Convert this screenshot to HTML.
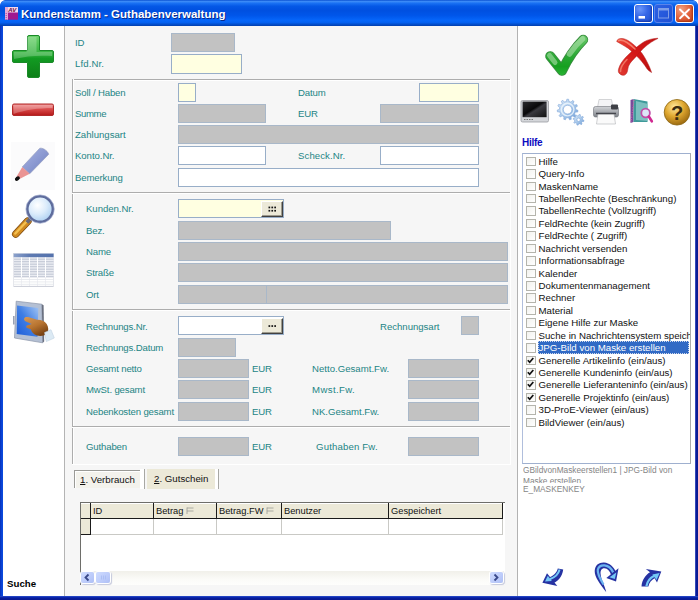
<!DOCTYPE html>
<html lang="de">
<head>
<meta charset="utf-8">
<title>Kundenstamm - Guthabenverwaltung</title>
<style>
html,body{margin:0;padding:0;}
body{width:698px;height:600px;overflow:hidden;background:#fff;font-family:"Liberation Sans",sans-serif;font-size:11px;position:relative;}
#win{position:absolute;left:0;top:0;width:698px;height:600px;overflow:hidden;background:#0b4bd8;border-radius:6px 6px 0 0;}
#tbar{position:absolute;left:0;top:0;width:698px;height:26px;border-radius:6px 6px 0 0;
background:linear-gradient(to bottom,#0a52d2 0%,#3c8cf8 6%,#1a72f4 12%,#0458e6 24%,#0050e0 40%,#0056ea 60%,#0666fa 78%,#0562f2 86%,#0450cf 93%,#033fae 100%);}
#tbar .ttl{position:absolute;left:21px;top:5px;color:#fff;font-weight:bold;font-size:11.5px;line-height:18px;white-space:nowrap;text-shadow:1px 1px 0 #0a2a8a;letter-spacing:0;}
#lb{position:absolute;left:0;top:26px;width:3px;height:574px;background:linear-gradient(to right,#0830b8,#0a44d6 55%,#0b4ce0);}
#rb{position:absolute;left:695px;top:26px;width:3px;height:574px;background:linear-gradient(to right,#5a70d0 0%,#0a1c9a 35%,#081890 100%);}
#bb{position:absolute;left:0;top:596px;width:698px;height:4px;background:linear-gradient(to bottom,#3a58d0 0%,#0a2cb4 25%,#081c9a 60%,#08188e 100%);}
#left{position:absolute;left:3px;top:26px;width:61px;height:570px;background:#fff;}
#ldiv{position:absolute;left:64px;top:26px;width:1px;height:570px;background:#b4b4b4;}
#main{position:absolute;left:65px;top:26px;width:452px;height:570px;background:#f6f6f6;}
#rdiv{position:absolute;left:517px;top:26px;width:1px;height:570px;background:#b2b2b2;}
#right{position:absolute;left:518px;top:26px;width:177px;height:570px;background:#fff;}
.l{position:absolute;color:#1c8585;font-size:9.6px;letter-spacing:-0.15px;line-height:11px;white-space:nowrap;}
.f{position:absolute;box-sizing:border-box;border:1px solid #8fa9c4;}
.g{background:#c2c2c2;border-color:#a9b8c9;}
.y{background:#ffffe1;border-color:#98aec8;}
.w{background:#fff;border-color:#98aec8;}
.hl{position:absolute;height:1px;background:#adadad;box-shadow:0 1px 0 #fff;}
.vl{position:absolute;width:1px;background:#adadad;box-shadow:1px 0 0 #fff;}
.abs{position:absolute;}
.wb{position:absolute;top:4px;width:19px;height:19px;box-sizing:border-box;border:1px solid #fff;border-radius:3px;background:radial-gradient(circle at 30% 25%,#6a96fa 0%,#3466e6 45%,#2050cc 100%);box-shadow:inset -1px -1px 2px #1838a8;}
.wb svg{position:absolute;left:-1px;top:-1px}
.wb.dis{border-color:#5a84ea;background:linear-gradient(135deg,#2d62e4,#1f50d4);box-shadow:none;}
.wb.cl{background:radial-gradient(circle at 30% 25%,#f2a080 0%,#e2633c 50%,#c4421e 100%);box-shadow:inset -1px -1px 2px #a83410;}
.eb{position:absolute;width:22px;height:16px;box-sizing:border-box;background:#ece9d8;border-top:1px solid #fff;border-left:1px solid #fff;border-right:1px solid #404040;border-bottom:1px solid #404040;box-shadow:inset -1px -1px 0 #9d9a8c;}
.eb svg{position:absolute;left:0;top:0}
.li{position:absolute;left:15px;height:12.400px;font-size:9.700px;line-height:14.400px;color:#111;white-space:nowrap;padding:0 1px;}
.li.sel{background:#316ac5;color:#fff;right:3px;outline:1px dotted #cfd8ea;outline-offset:-1px;}
.cb{position:absolute;left:3.5px;width:9.5px;height:9.5px;box-sizing:border-box;border:1px solid #b4b4ac;background:linear-gradient(135deg,#f2f2ee,#fff);}
.cb svg{position:absolute;left:-1px;top:-1px;}
.tb{font-size:9.7px;line-height:12px;color:#111;white-space:nowrap;}
.gh{top:503px;height:16px;box-sizing:border-box;border-left:1px solid #1a1a1a;font-size:9.3px;line-height:16px;padding-left:2px;color:#111;white-space:nowrap;}
.gh svg.fl{margin-left:3px;vertical-align:0px;}
.gv{top:519px;width:1px;height:15px;background:#c9c9c5;}
.sbb{width:13px;height:11px;border-radius:2px;background:linear-gradient(135deg,#cfdcff,#bccbfa 60%,#aebff5);box-shadow:0 0 0 1px #fff, 1px 1px 1px 1px #c5c9dc;}
.sbb svg{display:block}
</style>
</head>
<body>
<div id="win">
<div id="tbar"><div class="ttl">Kundenstamm - Guthabenverwaltung</div>
<svg class="abs" style="left:4px;top:6px" width="16" height="15" viewBox="4 6 16 15">
<rect x="5" y="7" width="13" height="12.700" fill="#a01890"/>
<rect x="5" y="7" width="13" height="5.500" fill="#f2d8ec"/>
<rect x="5" y="7" width="3" height="12.700" fill="#e4a8d6"/>
<path d="M6.200 13v6.500" stroke="#a01890" stroke-width="0.800" stroke-dasharray="1 1"/>
<text x="12.300" y="11.800" text-anchor="middle" font-family="Liberation Sans, sans-serif" font-weight="bold" font-style="italic" font-size="6" fill="#6a0a40">AV</text>
</svg>
<div class="wb" style="left:634px"><svg width="19" height="19" viewBox="0 0 19 19"><rect x="4.500" y="12" width="6.500" height="2.600" fill="#fff"/></svg></div>
<div class="wb dis" style="left:654px"><svg width="19" height="19" viewBox="0 0 19 19"><rect x="4.500" y="4.500" width="10" height="9.500" fill="none" stroke="#7f9ee8" stroke-width="1"/><rect x="4.500" y="4.500" width="10" height="2" fill="#7f9ee8"/></svg></div>
<div class="wb cl" style="left:675px"><svg width="19" height="19" viewBox="0 0 19 19"><path d="M5 5.500L14 14.200M14 5.500L5 14.200" stroke="#fff" stroke-width="1.900" stroke-linecap="round"/></svg></div>
</div>
<div id="lb"></div><div id="rb"></div>
<div id="left"></div><div id="ldiv"></div>
<div id="main"></div><div id="rdiv"></div>
<div id="right"></div>
<div id="bb"></div>
<!-- FORM -->
<div id="form">
<div class="l" style="left:75px;top:37px">ID</div>
<div class="f g" style="left:171px;top:33px;width:64px;height:19px"></div>
<div class="l" style="left:75px;top:58px;letter-spacing:0.12px">Lfd.Nr.</div>
<div class="f y" style="left:171px;top:54px;width:71px;height:20px"></div>

<div class="hl" style="left:72px;top:79px;width:438px"></div>
<div class="vl" style="left:72px;top:79px;height:385px"></div>
<div class="abs" style="left:510px;top:79px;height:386px;width:1px;background:#fff"></div>
<div class="hl" style="left:72px;top:192px;width:438px"></div>
<div class="hl" style="left:72px;top:309px;width:438px"></div>
<div class="hl" style="left:72px;top:426px;width:438px"></div>
<div class="abs" style="left:72px;top:464px;width:439px;height:1px;background:#fff"></div>

<div class="l" style="left:75px;top:87px">Soll / Haben</div>
<div class="f y" style="left:178px;top:83px;width:18px;height:19px"></div>
<div class="l" style="left:298px;top:87px">Datum</div>
<div class="f y" style="left:419px;top:83px;width:60px;height:19px"></div>
<div class="l" style="left:75px;top:108px;letter-spacing:-0.37px">Summe</div>
<div class="f g" style="left:178px;top:104px;width:88px;height:19px"></div>
<div class="l" style="left:298px;top:108px">EUR</div>
<div class="f g" style="left:380px;top:104px;width:99px;height:19px"></div>
<div class="l" style="left:75px;top:129px;letter-spacing:0.00px">Zahlungsart</div>
<div class="f g" style="left:178px;top:125px;width:301px;height:19px"></div>
<div class="l" style="left:75px;top:150px;letter-spacing:-0.06px">Konto.Nr.</div>
<div class="f w" style="left:178px;top:146px;width:88px;height:19px"></div>
<div class="l" style="left:298px;top:150px;letter-spacing:0.09px">Scheck.Nr.</div>
<div class="f w" style="left:380px;top:146px;width:99px;height:19px"></div>
<div class="l" style="left:75px;top:172px">Bemerkung</div>
<div class="f w" style="left:178px;top:168px;width:301px;height:19px"></div>

<div class="l" style="left:86px;top:203px;letter-spacing:-0.05px">Kunden.Nr.</div>
<div class="f y" style="left:178px;top:199px;width:106px;height:19px"></div>
<div class="eb" style="left:261px;top:201px"><svg width="20" height="14" viewBox="0 0 20 14"><g fill="#111"><rect x="6.500" y="4.600" width="1.700" height="1.700"/><rect x="9.400" y="4.600" width="1.700" height="1.700"/><rect x="12.300" y="4.600" width="1.700" height="1.700"/><rect x="6.500" y="7.900" width="1.700" height="1.700"/><rect x="9.400" y="7.900" width="1.700" height="1.700"/><rect x="12.300" y="7.900" width="1.700" height="1.700"/></g></svg></div>
<div class="l" style="left:86px;top:225px">Bez.</div>
<div class="f g" style="left:178px;top:221px;width:213px;height:19px"></div>
<div class="l" style="left:86px;top:246px">Name</div>
<div class="f g" style="left:178px;top:242px;width:330px;height:19px"></div>
<div class="l" style="left:86px;top:267px">Straße</div>
<div class="f g" style="left:178px;top:263px;width:330px;height:19px"></div>
<div class="l" style="left:86px;top:289px">Ort</div>
<div class="f g" style="left:178px;top:285px;width:89px;height:19px"></div>
<div class="f g" style="left:266px;top:285px;width:242px;height:19px"></div>

<div class="l" style="left:86px;top:321px">Rechnungs.Nr.</div>
<div class="f w" style="left:178px;top:316px;width:106px;height:19px"></div>
<div class="eb" style="left:261px;top:318px"><svg width="20" height="14" viewBox="0 0 20 14"><g fill="#111"><rect x="6.500" y="6.200" width="1.700" height="1.700"/><rect x="9.400" y="6.200" width="1.700" height="1.700"/><rect x="12.300" y="6.200" width="1.700" height="1.700"/></g></svg></div>
<div class="l" style="left:380px;top:321px;letter-spacing:-0.02px">Rechnungsart</div>
<div class="f g" style="left:461px;top:316px;width:18px;height:19px"></div>
<div class="l" style="left:86px;top:342px">Rechnungs.Datum</div>
<div class="f g" style="left:178px;top:338px;width:58px;height:19px"></div>
<div class="l" style="left:86px;top:363px">Gesamt netto</div>
<div class="f g" style="left:178px;top:359px;width:71px;height:19px"></div>
<div class="l" style="left:252px;top:363px">EUR</div>
<div class="l" style="left:312px;top:363px;letter-spacing:0.02px">Netto.Gesamt.Fw.</div>
<div class="f g" style="left:408px;top:359px;width:71px;height:19px"></div>
<div class="l" style="left:86px;top:384px">MwSt. gesamt</div>
<div class="f g" style="left:178px;top:380px;width:71px;height:19px"></div>
<div class="l" style="left:252px;top:384px">EUR</div>
<div class="l" style="left:312px;top:384px;letter-spacing:0.39px">Mwst.Fw.</div>
<div class="f g" style="left:408px;top:380px;width:71px;height:19px"></div>
<div class="l" style="left:86px;top:406px">Nebenkosten gesamt</div>
<div class="f g" style="left:178px;top:402px;width:71px;height:19px"></div>
<div class="l" style="left:252px;top:406px">EUR</div>
<div class="l" style="left:312px;top:406px;letter-spacing:0.01px">NK.Gesamt.Fw.</div>
<div class="f g" style="left:408px;top:402px;width:71px;height:19px"></div>

<div class="l" style="left:86px;top:441px">Guthaben</div>
<div class="f g" style="left:178px;top:437px;width:71px;height:19px"></div>
<div class="l" style="left:252px;top:441px">EUR</div>
<div class="l" style="left:316px;top:441px;letter-spacing:0.17px">Guthaben Fw.</div>
<div class="f g" style="left:408px;top:437px;width:71px;height:19px"></div>
</div>
<!-- /FORM -->
<!-- TABS -->
<div id="tabs">
<div class="abs" style="left:74px;top:470px;width:66px;height:18px;background:#f3f2ec;border-left:1px solid #9a9a96;border-top:1px solid #9a9a96;box-sizing:border-box;box-shadow:inset 1px 1px 0 #fff;"></div>
<div class="abs" style="left:140px;top:469px;width:4px;height:20px;background:#fff"></div>
<div class="abs" style="left:144px;top:469px;width:1px;height:20px;background:#a8a8a4"></div>
<div class="abs tb" style="left:80px;top:474px"><u>1</u>. Verbrauch</div>
<div class="abs" style="left:147px;top:469px;width:68px;height:20px;background:#ece9d8"></div>
<div class="abs" style="left:215px;top:469px;width:3px;height:20px;background:#fff"></div>
<div class="abs" style="left:218px;top:469px;width:1px;height:20px;background:#a8a8a4"></div>
<div class="abs tb" style="left:154px;top:473px"><u>2</u>. Gutschein</div>
</div>
<!-- GRID -->
<div id="grid">
<div class="abs" style="left:80px;top:502px;width:425px;height:83px;background:#fff;border-left:1px solid #6e6e6a;border-top:1px solid #6e6e6a;box-sizing:border-box;"></div>
<div class="abs" style="left:81px;top:503px;width:422px;height:16px;background:#ece9d8;border-bottom:1px solid #1a1a1a;box-sizing:border-box;box-shadow:inset 0 1px 0 #fff"></div>
<div class="abs gh" style="left:90px;width:63px">ID</div>
<div class="abs gh" style="left:153px;width:63px">Betrag<svg class="fl" width="8" height="7" viewBox="0 0 8 7"><path d="M1 0.5V7M1 1H7.5M1 4H7.5" stroke="#9a9a95" stroke-width="0.8" fill="none"/></svg></div>
<div class="abs gh" style="left:216px;width:65px">Betrag.FW<svg class="fl" width="8" height="7" viewBox="0 0 8 7"><path d="M1 0.5V7M1 1H7.5M1 4H7.5" stroke="#9a9a95" stroke-width="0.8" fill="none"/></svg></div>
<div class="abs gh" style="left:281px;width:107px">Benutzer</div>
<div class="abs gh" style="left:388px;width:115px;border-right:1px solid #1a1a1a">Gespeichert</div>
<div class="abs" style="left:81px;top:519px;width:10px;height:16px;background:#ece9d8;border-right:1px solid #1a1a1a;border-bottom:1px solid #1a1a1a;box-sizing:border-box"></div>
<div class="abs" style="left:91px;top:534px;width:412px;height:1px;background:#c9c9c5"></div>
<div class="abs gv" style="left:153px"></div><div class="abs gv" style="left:216px"></div><div class="abs gv" style="left:281px"></div><div class="abs gv" style="left:388px"></div><div class="abs gv" style="left:502px"></div>
<div class="abs" style="left:81px;top:571px;width:423px;height:14px;background:linear-gradient(to bottom,#f1f0ea,#fbfbf8 60%,#fefefc)"></div>
<div class="abs sbb" style="left:81px;top:572px"><svg width="12" height="11" viewBox="0 0 12 11"><path d="M7.5 2.5L4.5 5.5L7.5 8.5" stroke="#3a4a8a" stroke-width="1.8" fill="none"/></svg></div>
<div class="abs sbb" style="left:96px;top:572px;width:14px"><svg width="12" height="11" viewBox="0 0 12 11"><path d="M5.500 3.500V7.500M7.500 3.500V7.500M9.500 3.500V7.500" stroke="#a9bdf3" stroke-width="0.9" fill="none"/></svg></div>
<div class="abs sbb" style="left:490px;top:572px"><svg width="12" height="11" viewBox="0 0 12 11"><path d="M4.5 2.5L7.5 5.5L4.5 8.5" stroke="#3a4a8a" stroke-width="1.8" fill="none"/></svg></div>
</div>
<!-- LEFTICONS -->
<div id="lefticons">
<svg class="abs" style="left:3px;top:28px" width="61" height="100" viewBox="3 28 61 100">
<defs>
<linearGradient id="gp" x1="0" y1="0" x2="0" y2="1"><stop offset="0" stop-color="#6fd46f"/><stop offset="0.45" stop-color="#2fae3a"/><stop offset="0.55" stop-color="#129a22"/><stop offset="1" stop-color="#0d7f18"/></linearGradient>
<linearGradient id="gm" x1="0" y1="0" x2="0" y2="1"><stop offset="0" stop-color="#f08a8a"/><stop offset="0.5" stop-color="#d64545"/><stop offset="1" stop-color="#b41818"/></linearGradient>
</defs>
<path d="M29 35.5h9a1.5 1.5 0 0 1 1.500 1.500v13.500h12.500a1.500 1.500 0 0 1 1.500 1.500v9a1.500 1.500 0 0 1 -1.500 1.500h-12.500v13.500a1.500 1.500 0 0 1 -1.500 1.500h-9a1.500 1.500 0 0 1 -1.500 -1.500v-13.500h-13.500a1.500 1.500 0 0 1 -1.500 -1.500v-9a1.500 1.500 0 0 1 1.500 -1.500h13.500v-13.500a1.500 1.500 0 0 1 1.500 -1.500z" fill="url(#gp)" stroke="#1a8a28" stroke-width="1"/>
<path d="M14 52h12.500v-15h10v15h15.500v4c-12 -1 -26 0 -38 3z" fill="#fff" opacity="0.22"/>
<rect x="12.500" y="104" width="41" height="11.500" rx="1.500" fill="url(#gm)" stroke="#b02a2a" stroke-width="1"/>
<path d="M13.500 105h39v3c-14 0 -28 2 -39 6z" fill="#fff" opacity="0.25"/>
</svg>
<svg class="abs" style="left:3px;top:135px" width="61" height="110" viewBox="3 135 61 110">
<defs>
<linearGradient id="pb" x1="0" y1="0" x2="1" y2="1"><stop offset="0" stop-color="#a8b4e2"/><stop offset="0.5" stop-color="#8c9ad2"/><stop offset="1" stop-color="#6f7fbe"/></linearGradient>
<radialGradient id="lens" cx="0.4" cy="0.35" r="0.7"><stop offset="0" stop-color="#ffffff"/><stop offset="0.5" stop-color="#dcecfb"/><stop offset="1" stop-color="#a9cdf0"/></radialGradient>
<linearGradient id="hd" x1="0" y1="0" x2="1" y2="1"><stop offset="0" stop-color="#f2b04a"/><stop offset="0.5" stop-color="#d98c1c"/><stop offset="1" stop-color="#a86410"/></linearGradient>
</defs>
<rect x="11" y="142" width="44" height="48" fill="#fbfbfc"/>
<path d="M39.600 148.400c2.500 -1.200 8.200 2.200 9.100 5.900L29.700 173.800L22.300 166.900Z" fill="url(#pb)" stroke="#8a94b8" stroke-width="0.600"/>
<path d="M22.300 166.900L29.700 173.800L19.500 179L16.600 176.400Z" fill="#ea9494"/>
<ellipse cx="17.400" cy="178.600" rx="2.800" ry="1.900" transform="rotate(-38 17.400 178.600)" fill="#111"/>
<path d="M27.800 221.200L15.800 234" stroke="#7a4a14" stroke-width="7.600" stroke-linecap="round"/>
<path d="M27.800 221.200L15.800 234" stroke="#d08a20" stroke-width="6.200" stroke-linecap="round"/>
<path d="M27.300 220.700L15.300 233.500" stroke="#f4c050" stroke-width="2.400" stroke-linecap="round"/>
<path d="M31.500 217.500L27 222.500" stroke="#6a6a78" stroke-width="4"/>
<circle cx="40.100" cy="209.100" r="12.800" fill="url(#lens)" stroke="#5e6c9c" stroke-width="2.600"/>
<circle cx="40.100" cy="209.100" r="14.200" fill="none" stroke="#a4aed0" stroke-width="0.700"/>
</svg>
<svg class="abs" style="left:3px;top:245px" width="61" height="105" viewBox="3 245 61 105">
<defs>
<linearGradient id="tfade" x1="0" y1="0" x2="0" y2="1"><stop offset="0" stop-color="#fff" stop-opacity="0"/><stop offset="0.55" stop-color="#fff" stop-opacity="0"/><stop offset="1" stop-color="#fff" stop-opacity="0.850"/></linearGradient>
<linearGradient id="thd" x1="0" y1="0" x2="1" y2="0"><stop offset="0" stop-color="#8ca2cc"/><stop offset="0.4" stop-color="#5e7ab2"/><stop offset="1" stop-color="#5472ac"/></linearGradient><linearGradient id="scr" x1="0" y1="1" x2="1" y2="0"><stop offset="0" stop-color="#1c5cd8"/><stop offset="0.5" stop-color="#3f7ee4"/><stop offset="1" stop-color="#a4c6f4"/></linearGradient>
<linearGradient id="hand" x1="0" y1="0" x2="0.600" y2="1"><stop offset="0" stop-color="#d89a58"/><stop offset="0.55" stop-color="#b87430"/><stop offset="1" stop-color="#7a4414"/></linearGradient>
</defs>
<rect x="13.600" y="253.400" width="40" height="33" fill="#fff" stroke="#d4d8e0" stroke-width="0.600"/>
<rect x="13.600" y="257" width="40" height="20.500" fill="#eaecf2"/>
<rect x="13.600" y="253.600" width="40" height="3.600" fill="url(#thd)"/>
<path d="M14 259.2h39.500" stroke="#bcc2d0" stroke-width="0.900"/><path d="M14 261.7h39.500" stroke="#bcc2d0" stroke-width="0.900"/><path d="M14 264.2h39.500" stroke="#bcc2d0" stroke-width="0.900"/><path d="M14 266.7h39.500" stroke="#bcc2d0" stroke-width="0.900"/><path d="M14 269.2h39.500" stroke="#bcc2d0" stroke-width="0.900"/><path d="M14 271.7h39.500" stroke="#bcc2d0" stroke-width="0.900"/><path d="M14 274.2h39.500" stroke="#bcc2d0" stroke-width="0.900"/><path d="M14 276.7h39.500" stroke="#bcc2d0" stroke-width="0.900"/><path d="M14 279.5h39.500" stroke="#dfe2e8" stroke-width="0.700"/><path d="M14 281.9h39.500" stroke="#dfe2e8" stroke-width="0.700"/><path d="M14 284.3h39.500" stroke="#dfe2e8" stroke-width="0.700"/>
<g stroke="#fff" stroke-width="1"><path d="M21.500 257.500v20M29.500 257.500v20M37.500 257.500v20M45.500 257.500v20"/></g>
<g stroke="#e4e6ec" stroke-width="0.600"><path d="M21.500 277.500v9M29.500 277.500v9M37.500 277.500v9M45.500 277.500v9"/></g>
<path d="M14 286.400h39.500" stroke="#c4c8d2" stroke-width="0.800"/>
<path d="M16.200 301.200L41.800 304.200L42.700 342.800L14.500 338Z" fill="#b4c0d4" stroke="#8a94a8" stroke-width="0.700"/>
<path d="M41.800 304.200L43.600 305.200L44.200 341.500L42.700 342.800Z" fill="#6a7080"/>
<path d="M17.100 305.500L38.300 308.100L37.500 336.700L16.700 334.100Z" fill="url(#scr)"/>
<path d="M13 316h1.600v8.500h-1.600z" fill="#9aa2b4"/>
<path d="M24.300 318.300c0.500 -1.300 2 -1.600 3.800 -1.200l9 2.600c3.500 -0.200 7.500 1.200 9.600 4.200c1.800 2.800 2 6.500 0.800 9.300c-2.500 2.600 -7 3.300 -10.500 2.200c-3.200 -1 -5.600 -3.500 -6.200 -6.200l-3.600 -1.200c-1.200 -0.600 -1.300 -1.800 -0.300 -2.500l4.800 -1.600l-6.300 -2.700c-1.200 -0.600 -1.600 -1.800 -1.100 -2.900z" fill="url(#hand)"/>
<path d="M44.500 332.500l6.500 -2.800l3.300 8.300l-8 3.600z" fill="#dceaf4" stroke="#b8cadc" stroke-width="0.500"/>
</svg>
<div class="abs" style="left:7px;top:578px;font-weight:bold;font-size:9.700px;line-height:12px;color:#000">Suche</div>
</div>
<!-- RIGHT -->
<div id="rightp">
<svg class="abs" style="left:530px;top:28px" width="150" height="60" viewBox="530 28 150 60">
<defs>
<linearGradient id="ck" gradientUnits="userSpaceOnUse" x1="0" y1="35" x2="0" y2="77"><stop offset="0" stop-color="#6ccc6c"/><stop offset="0.5" stop-color="#2aa834"/><stop offset="0.75" stop-color="#16a020"/><stop offset="1" stop-color="#2cb838"/></linearGradient>
<linearGradient id="rx" x1="0" y1="0" x2="1" y2="1"><stop offset="0" stop-color="#ee4a3a"/><stop offset="0.5" stop-color="#d81818"/><stop offset="1" stop-color="#b40e0e"/></linearGradient><linearGradient id="rx2" x1="1" y1="0" x2="0" y2="1"><stop offset="0" stop-color="#c01414"/><stop offset="0.5" stop-color="#d41818"/><stop offset="1" stop-color="#e03a30"/></linearGradient>
</defs>
<path d="M550.200 56.200L562 70.800Q571 52 583.200 39.800" stroke="#3a8c40" stroke-width="10" stroke-linecap="round" stroke-linejoin="round" fill="none"/>
<path d="M550.200 56.200L562 70.800Q571 52 583.200 39.800" stroke="url(#ck)" stroke-width="8.200" stroke-linecap="round" stroke-linejoin="round" fill="none"/>
<path d="M549.500 55.500L555 62.500" stroke="#b8e4b4" stroke-width="5" stroke-linecap="round" fill="none" opacity="0.550"/>
<path d="M569.500 54Q575.500 45 582.500 39" stroke="#b8e4b4" stroke-width="5.500" stroke-linecap="round" fill="none" opacity="0.550"/>
<path d="M616.700 41.500C617 39.500 619 38.300 622 38.500C627 38.800 632 43 636.600 47.300C641 51.500 644 56 645.800 59.500C648.500 64.500 650.500 69 651.600 72.500C649.500 71.500 648 70 647 68.800C644 64 640.500 59.500 636.600 56C633.500 53 631 50.500 628 48.200C624 45.500 620 43.500 616.700 41.500Z" fill="url(#rx)" stroke="#b01a1a" stroke-width="0.500"/>
<path d="M657.900 38.200C654 38.500 650 39.200 647 40.400C643 42 640 44.500 636.600 47.300C632 51 628.500 54.500 625.300 57.800C622 61.500 620 64.500 618.800 68.200C618 70.500 618.200 72.300 619.300 73.400C620.800 75 623 75.600 624.500 75.100C626.300 74.300 627.200 72.500 627.500 70.800C627.700 69.300 628 67.800 628.400 66.400C630 62.500 632.800 59.800 635.800 56.900C638 54.500 640.200 51.500 642.700 49.100C645.500 46.300 648.500 44 651.400 42.100C653.800 40.600 656 39.300 657.900 38.500Z" fill="url(#rx2)" stroke="#b01a1a" stroke-width="0.500"/>
<path d="M618.500 40.500C621 39.500 624 40.500 627 42.500C630 44.500 633 47 635 49" stroke="#f8907a" stroke-width="1.600" fill="none" opacity="0.800" stroke-linecap="round"/>
<path d="M620.500 71.500C620.500 68 623 63.500 627 59.500" stroke="#f8907a" stroke-width="1.600" fill="none" opacity="0.700" stroke-linecap="round"/>
</svg>
<svg class="abs" style="left:518px;top:94px" width="176" height="36" viewBox="518 94 176 36">
<defs>
<linearGradient id="mon" x1="0" y1="0" x2="1" y2="1"><stop offset="0" stop-color="#2a2a2e"/><stop offset="0.45" stop-color="#08080a"/><stop offset="0.55" stop-color="#3a3a40"/><stop offset="1" stop-color="#111"/></linearGradient>
<radialGradient id="hq" cx="0.4" cy="0.3" r="0.8"><stop offset="0" stop-color="#ffe9a0"/><stop offset="0.45" stop-color="#e0a830"/><stop offset="1" stop-color="#8a5a08"/></radialGradient>
<linearGradient id="gear" x1="0" y1="0" x2="1" y2="1"><stop offset="0" stop-color="#dcecfa"/><stop offset="0.55" stop-color="#a8c8ea"/><stop offset="1" stop-color="#6c9cd6"/></linearGradient>
<linearGradient id="prn" x1="0" y1="0" x2="0" y2="1"><stop offset="0" stop-color="#d2d4d8"/><stop offset="1" stop-color="#7e8288"/></linearGradient>
</defs>
<rect x="521" y="100.500" width="27.500" height="21.500" rx="1.500" fill="#d4d6da" stroke="#9a9ca2" stroke-width="0.800"/>
<rect x="522.600" y="101.600" width="24" height="15.600" fill="url(#mon)"/>
<path d="M524 119.500h10" stroke="#777" stroke-width="1.200" stroke-dasharray="1.500 1"/>
<path d="M575.80 109.60L577.98 110.31L577.70 112.07L575.41 112.09L574.50 114.03L575.94 115.81L574.76 117.14L572.83 115.92L571.01 117.06L571.26 119.33L569.55 119.82L568.58 117.74L566.43 117.72L565.42 119.77L563.72 119.25L564.02 116.98L562.23 115.80L560.27 116.97L559.12 115.62L560.60 113.87L559.73 111.91L557.44 111.84L557.21 110.08L559.40 109.41L559.73 107.29L557.85 105.99L558.60 104.38L560.80 105.01L562.23 103.40L561.34 101.29L562.85 100.35L564.36 102.07L566.43 101.48L566.83 99.23L568.61 99.25L568.95 101.51L571.01 102.14L572.56 100.46L574.04 101.44L573.11 103.53L574.50 105.17L576.71 104.59L577.43 106.22L575.52 107.47ZM563.30 109.60 a4.30 4.30 0 1 0 8.60 0 a4.30 4.30 0 1 0 -8.60 0Z" fill="url(#gear)" fill-rule="evenodd" stroke="#7fa6d8" stroke-width="0.600"/>
<path d="M582.70 119.80L583.98 120.31L583.71 121.55L582.34 121.49L581.50 122.70L582.04 123.96L580.98 124.65L580.05 123.64L578.60 123.90L578.09 125.18L576.85 124.91L576.91 123.54L575.70 122.70L574.44 123.24L573.75 122.18L574.76 121.25L574.50 119.80L573.22 119.29L573.49 118.05L574.86 118.11L575.70 116.90L575.16 115.64L576.22 114.95L577.15 115.96L578.60 115.70L579.11 114.42L580.35 114.69L580.29 116.06L581.50 116.90L582.76 116.36L583.45 117.42L582.44 118.35ZM576.90 119.80 a1.70 1.70 0 1 0 3.40 0 a1.70 1.70 0 1 0 -3.40 0Z" fill="url(#gear)" fill-rule="evenodd" stroke="#7fa6d8" stroke-width="0.600"/>
<circle cx="567.600" cy="109.600" r="6.300" fill="none" stroke="#f0f7fe" stroke-width="1.400" opacity="0.800"/>
<path d="M599 99.500h12.500l1.500 8h-15.500z" fill="#f4f4f6" stroke="#b8babe" stroke-width="0.600"/>
<rect x="593.500" y="106.500" width="25" height="10.500" rx="2" fill="url(#prn)" stroke="#6e7278" stroke-width="0.600"/>
<rect x="611" y="104.500" width="7" height="5" rx="1" fill="#3e4046"/>
<path d="M598 114h16l1.500 10h-19z" fill="#fafafa" stroke="#b0b2b6" stroke-width="0.600"/>
<path d="M596 113.500h20" stroke="#44464c" stroke-width="1.400"/>
<path d="M630.500 100l3 -1v23l-3 1z" fill="#7a4a9a"/>
<path d="M633.500 99l14 2.500v20.500l-14 0z" fill="#3f9a9a"/>
<path d="M636 101l12 3v17l-12 -1z" fill="#8cc8c8" opacity="0.800"/>
<path d="M634 100l-3 22" stroke="#c060a0" stroke-width="1.200" stroke-dasharray="1.200 1.200"/>
<circle cx="645.600" cy="113" r="4.300" fill="#dce6f6" stroke="#c050a8" stroke-width="1.800"/>
<path d="M648.800 116.500l3 4.800" stroke="#d02890" stroke-width="2.600" stroke-linecap="round"/>
<circle cx="677" cy="112.300" r="12.800" fill="url(#hq)" stroke="#8a6410" stroke-width="0.800"/>
<text x="677" y="119.500" text-anchor="middle" font-family="Liberation Sans, sans-serif" font-weight="bold" font-size="20" fill="#3a2a10">?</text>
</svg>
<div class="abs" style="left:522px;top:137px;font-weight:bold;font-size:10px;letter-spacing:-0.25px;line-height:12px;color:#0a0ac0">Hilfe</div>
<div class="abs" id="lst" style="left:522px;top:153px;width:169px;height:311px;box-sizing:border-box;border:1px solid #9fb0cf;border-left-color:#b0bedc;border-right-color:#aaaaaa;background:#fff;overflow:hidden">
<div style="position:absolute;left:-0.5px;top:-1px;width:169px;height:311px">
<div class="cb" style="top:3.70px"></div><div class="li" style="top:1.70px">Hilfe</div>
<div class="cb" style="top:16.13px"></div><div class="li" style="top:14.13px">Query-Info</div>
<div class="cb" style="top:28.56px"></div><div class="li" style="top:26.56px">MaskenName</div>
<div class="cb" style="top:40.99px"></div><div class="li" style="top:38.99px">TabellenRechte (Beschränkung)</div>
<div class="cb" style="top:53.42px"></div><div class="li" style="top:51.42px">TabellenRechte (Vollzugriff)</div>
<div class="cb" style="top:65.85px"></div><div class="li" style="top:63.85px">FeldRechte (kein Zugriff)</div>
<div class="cb" style="top:78.28px"></div><div class="li" style="top:76.28px">FeldRechte ( Zugriff)</div>
<div class="cb" style="top:90.71px"></div><div class="li" style="top:88.71px">Nachricht versenden</div>
<div class="cb" style="top:103.14px"></div><div class="li" style="top:101.14px">Informationsabfrage</div>
<div class="cb" style="top:115.57px"></div><div class="li" style="top:113.57px">Kalender</div>
<div class="cb" style="top:128.00px"></div><div class="li" style="top:126.00px">Dokumentenmanagement</div>
<div class="cb" style="top:140.43px"></div><div class="li" style="top:138.43px">Rechner</div>
<div class="cb" style="top:152.86px"></div><div class="li" style="top:150.86px">Material</div>
<div class="cb" style="top:165.29px"></div><div class="li" style="top:163.29px">Eigene Hilfe zur Maske</div>
<div class="cb" style="top:177.72px"></div><div class="li" style="top:175.72px">Suche in Nachrichtensystem speichern</div>
<div class="cb" style="top:190.15px"></div><div class="li sel" style="top:188.15px">JPG-Bild von Maske erstellen</div>
<div class="cb" style="top:202.58px"><svg width="9" height="9" viewBox="0 0 9 9"><path d="M1.800 4.200L3.700 6.300L7.300 2" stroke="#111" stroke-width="1.700" fill="none"/></svg></div><div class="li" style="top:200.58px">Generelle Artikelinfo (ein/aus)</div>
<div class="cb" style="top:215.01px"><svg width="9" height="9" viewBox="0 0 9 9"><path d="M1.800 4.200L3.700 6.300L7.300 2" stroke="#111" stroke-width="1.700" fill="none"/></svg></div><div class="li" style="top:213.01px">Generelle Kundeninfo (ein/aus)</div>
<div class="cb" style="top:227.44px"><svg width="9" height="9" viewBox="0 0 9 9"><path d="M1.800 4.200L3.700 6.300L7.300 2" stroke="#111" stroke-width="1.700" fill="none"/></svg></div><div class="li" style="top:225.44px">Generelle Lieferanteninfo (ein/aus)</div>
<div class="cb" style="top:239.87px"><svg width="9" height="9" viewBox="0 0 9 9"><path d="M1.800 4.200L3.700 6.300L7.300 2" stroke="#111" stroke-width="1.700" fill="none"/></svg></div><div class="li" style="top:237.87px">Generelle Projektinfo (ein/aus)</div>
<div class="cb" style="top:252.30px"></div><div class="li" style="top:250.30px">3D-ProE-Viewer (ein/aus)</div>
<div class="cb" style="top:264.73px"></div><div class="li" style="top:262.73px">BildViewer (ein/aus)</div>
</div></div>
<div class="abs" style="left:523px;top:465px;width:168px;height:18px;overflow:hidden;font-size:8.300px;line-height:11px;color:#858585;white-space:nowrap">GBildvonMaskeerstellen1 | JPG-Bild von<br>Maske erstellen</div>
<div class="abs" style="left:523px;top:484px;font-size:8.300px;line-height:11px;color:#858585;white-space:nowrap">E_MASKENKEY</div>
<svg class="abs" style="left:528px;top:555px" width="160" height="41" viewBox="528 555 160 41">
<defs><linearGradient id="ar" x1="0" y1="0" x2="1" y2="1"><stop offset="0" stop-color="#8fd4f8"/><stop offset="1" stop-color="#3a78d8"/></linearGradient></defs>
<path d="M563.200 569.400C562.400 576.500 557.800 581.800 551 584L548.600 577.600C553 576.200 556.600 573.200 557.800 568.600Z" fill="#2632a2"/>
<path d="M542.400 582.800L547 573.300L557.300 586Z" fill="#2632a2"/>
<path d="M559.600 569.600C558.400 574.200 555 577.600 549.800 579.200" stroke="#74c8f6" stroke-width="2" fill="none"/>
<path d="M545 581.400L547.800 575.800L551.800 581Z" fill="#74c8f6"/>
<path d="M606.300 592.200C600 584 594.500 577 594.700 571C595 565 599 562.300 604 562.500C609.500 562.800 614 567 616 572L611 575C610 571 607.500 568.500 604.500 568.300C601.500 568.200 600.300 570.500 600.600 574C601 579.500 604.500 585 606.300 592.200Z" fill="#2632a2"/>
<path d="M603.500 584.500C599 577 597.300 573 597.800 569.800C598.600 566.200 601.500 565.200 604.500 565.400C608.500 565.900 611.500 568.500 613.200 572.500" stroke="#6cb4f0" stroke-width="2.200" fill="none"/>
<path d="M618.500 568.300L616 581.400L606.300 578Z" fill="#2632a2"/>
<path d="M616.300 572.500L614.800 579L609.500 577.200Z" fill="#74c8f6"/>
<path d="M641.500 586.400C642 580 645.500 575 650 572.300L645.800 569L661.300 571.600L657 582.500L654.600 578.200C651.500 580 649.200 582.600 648.400 586.400Z" fill="#2632a2"/>
<path d="M646.400 586.200C647.200 581.600 650 578 654.300 575.800" stroke="#74c8f6" stroke-width="2.200" fill="none"/>
<path d="M659.600 573L656.600 580L652.400 574.400Z" fill="#74c8f6"/>
</svg>
</div>
</div>
</body>
</html>
